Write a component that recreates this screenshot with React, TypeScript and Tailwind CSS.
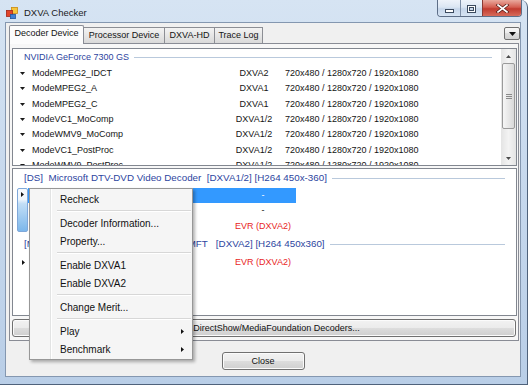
const RES = '720x480 / 1280x720 / 1920x1080';

const modes = [
  ['ModeMPEG2_IDCT', 'DXVA2'],
  ['ModeMPEG2_A', 'DXVA1'],
  ['ModeMPEG2_C', 'DXVA1'],
  ['ModeVC1_MoComp', 'DXVA1/2'],
  ['ModeWMV9_MoComp', 'DXVA1/2'],
  ['ModeVC1_PostProc', 'DXVA1/2'],
  ['ModeWMV9_PostProc', 'DXVA1/2'],
];

type MenuEntry = { label?: string; sub?: boolean; sep?: boolean };

const menu: MenuEntry[] = [
  { label: 'Recheck' },
  { sep: true },
  { label: 'Decoder Information...' },
  { label: 'Property...' },
  { sep: true },
  { label: 'Enable DXVA1' },
  { label: 'Enable DXVA2' },
  { sep: true },
  { label: 'Change Merit...' },
  { sep: true },
  { label: 'Play', sub: true },
  { label: 'Benchmark', sub: true },
];

function DownTri({ color = '#1a1a1a' }: { color?: string }) {
  return (
    <svg width="5" height="3" viewBox="0 0 5 3" className="shrink-0">
      <path d="M0 0H5L2.5 3Z" fill={color} />
    </svg>
  );
}

function UpTri() {
  return (
    <svg width="5" height="3" viewBox="0 0 5 3" className="shrink-0">
      <path d="M0 3H5L2.5 0Z" fill="#4a4a4a" />
    </svg>
  );
}

function RightTri() {
  return (
    <svg width="3" height="5" viewBox="0 0 3 5" className="shrink-0">
      <path d="M0 0V5L3 2.5Z" fill="#111" />
    </svg>
  );
}

function AppIcon() {
  return (
    <svg width="12" height="12" viewBox="0 0 12 12" className="mt-[7px] ml-[1px] shrink-0">
      <rect x="5.4" y="0.4" width="6" height="6" fill="#f6c63c" stroke="#c98a12" strokeWidth="0.8" />
      <rect x="0.4" y="3.4" width="6" height="6" fill="#e2452a" stroke="#a3261a" strokeWidth="0.8" />
      <rect x="4.4" y="7.4" width="5" height="4.2" fill="#3f7fd6" stroke="#23559e" strokeWidth="0.8" />
    </svg>
  );
}

function TitleBar() {
  return (
    <div className="h-[22px] shrink-0 flex items-start">
      <AppIcon />
      <span className="mt-[8px] ml-[6px] text-[9.5px] leading-[10px] text-[#1b1b1b]">DXVA Checker</span>
      <div className="ml-auto -mr-[1px] flex h-[17px] border border-t-0 border-[#5d6e87] rounded-b-[4px] overflow-hidden">
        <div className="w-[22px] flex items-end justify-center pb-[3px] bg-[linear-gradient(#eef3fa,#dbe6f3_45%,#c6d6ea_55%,#d6e4f3)]">
          <svg width="9" height="4" viewBox="0 0 9 4">
            <rect x="0.5" y="0.5" width="8" height="3" fill="#fff" stroke="#3b4a5e" strokeWidth="1" />
          </svg>
        </div>
        <div className="w-[22px] border-l border-[#7f90a8] flex items-start justify-center pt-[5px] bg-[linear-gradient(#eef3fa,#dbe6f3_45%,#c6d6ea_55%,#d6e4f3)]">
          <svg width="9" height="8" viewBox="0 0 9 8">
            <rect x="0.5" y="0.5" width="8" height="7" fill="none" stroke="#3b4a5e" strokeWidth="1" />
            <rect x="1.5" y="1.5" width="6" height="5" fill="none" stroke="#fff" strokeWidth="1" />
            <rect x="2.5" y="2.5" width="4" height="3" fill="none" stroke="#3b4a5e" strokeWidth="1" />
          </svg>
        </div>
        <div className="w-[39px] border-l border-[#8a3a33] flex items-start justify-center pt-[4px] bg-[linear-gradient(#e9aa9e,#d45e51_45%,#c13b2f_55%,#d76b5b)]">
          <svg width="15" height="9" viewBox="0 0 15 9">
            <path d="M3 1L12 8M12 1L3 8" stroke="#5a1f1a" strokeWidth="3.2" strokeLinecap="square" />
            <path d="M3 1L12 8M12 1L3 8" stroke="#fff" strokeWidth="1.6" strokeLinecap="square" />
          </svg>
        </div>
      </div>
    </div>
  );
}

function Tabs() {
  return (
    <div className="h-[18px] mt-[2px] shrink-0 flex items-end pl-[3px] text-[9px]">
      <div className="relative z-10 w-[75px] h-[19px] -mb-px pb-[2px] flex items-center justify-center border border-b-0 border-[#898c95] rounded-t-[2px] bg-[#fcfcfc]">
        Decoder Device
      </div>
      <div className="w-[81px] h-[16px] flex items-center justify-center border border-l-0 border-b-0 border-[#8c8e94] bg-gradient-to-b from-[#f3f3f3] to-[#d9d9d9]">
        Processor Device
      </div>
      <div className="w-[50px] h-[16px] flex items-center justify-center border border-l-0 border-b-0 border-[#8c8e94] bg-gradient-to-b from-[#f3f3f3] to-[#d9d9d9]">
        DXVA-HD
      </div>
      <div className="w-[48px] h-[16px] flex items-center justify-center border border-l-0 border-b-0 border-[#8c8e94] bg-gradient-to-b from-[#f3f3f3] to-[#d9d9d9]">
        Trace Log
      </div>
      <div className="ml-auto mb-[3px] w-[16px] h-[13px] flex items-center justify-center rounded-[2px] border border-[#707070] bg-[linear-gradient(#f7f7f7,#ececec_50%,#dedede_50%,#d2d2d2)]">
        <svg width="7" height="4" viewBox="0 0 7 4">
          <path d="M0 0H7L3.5 4Z" fill="#111" />
        </svg>
      </div>
    </div>
  );
}

function Scrollbar() {
  return (
    <div className="w-[15px] shrink-0 flex flex-col bg-gradient-to-r from-[#e4e4e4] via-[#f3f3f3] to-[#e4e4e4]">
      <div className="h-[14px] flex items-center justify-center">
        <UpTri />
      </div>
      <div className="mx-[1px] h-[66px] rounded-[2px] border border-[#9a9a9a] bg-gradient-to-r from-[#f6f6f6] to-[#d9d9d9] flex flex-col items-center justify-center gap-[1px]">
        <div className="w-[6px] h-px bg-[#8a8a8a]" />
        <div className="w-[6px] h-px bg-[#8a8a8a]" />
        <div className="w-[6px] h-px bg-[#8a8a8a]" />
      </div>
      <div className="flex-1" />
      <div className="h-[13px] flex items-center justify-center">
        <DownTri color="#4a4a4a" />
      </div>
    </div>
  );
}

function DeviceList() {
  return (
    <div className="h-[118px] shrink-0 flex border border-[#828790] bg-white overflow-hidden">
      <div className="flex-1 min-w-0">
        <div className="h-[17px] flex items-center pl-[11px] mr-[9px] text-[9px] text-[#2d45a0]">
          <span className="whitespace-nowrap">NVIDIA GeForce 7300 GS</span>
          <div className="flex-1 h-px ml-[5px] bg-[#b9c9dc]" />
        </div>
        {modes.map(([name, ver]) => (
          <div key={name} className="h-[15.33px] flex items-center pl-[7px] text-[9px] whitespace-nowrap">
            <DownTri />
            <span className="ml-[7px] w-[202px]">{name}</span>
            <span className="w-[40px] text-center">{ver}</span>
            <span className="ml-[11px]">{RES}</span>
          </div>
        ))}
      </div>
      <Scrollbar />
    </div>
  );
}

function DecoderList() {
  return (
    <div className="h-[148px] mt-[2px] shrink-0 border border-[#828790] bg-white overflow-hidden text-[9px]">
      <div className="h-[19px] flex items-center pl-[11px] mr-[11px] text-[9.8px] text-[#2d45a0]">
        <span className="whitespace-pre">[DS]  Microsoft DTV-DVD Video Decoder  [DXVA1/2] [H264 450x-360]</span>
        <div className="flex-1 h-px ml-[5px] bg-[#b9c9dc]" />
      </div>
      <div className="flex">
        <div className="ml-[4px] w-[11px] h-[44px] pt-[3px] flex justify-center rounded-[2px] border border-[#7fa8da] bg-[linear-gradient(#f6f9fd,#eef5fc_25%,#c2def6_35%,#7cb7eb)]">
          <RightTri />
        </div>
        <div className="flex flex-col">
          <div className="h-[15.33px] flex items-center bg-[#3399ff] text-white">
            <span className="w-[202px]" />
            <span className="w-[66px] text-center">-</span>
          </div>
          <div className="h-[15.33px] flex items-center">
            <span className="w-[202px]" />
            <span className="w-[66px] text-center">-</span>
          </div>
          <div className="h-[15.33px] flex items-center text-[#e81e25]">
            <span className="w-[202px]" />
            <span className="w-[66px] text-center">EVR (DXVA2)</span>
          </div>
        </div>
      </div>
      <div className="h-[20.67px] flex items-center pl-[11px] mr-[11px] text-[9.8px] text-[#2d45a0]">
        <span className="whitespace-pre">[MF]  Microsoft H.264 Video Decoder MFT   [DXVA2] [H264 450x360]</span>
        <div className="flex-1 h-px ml-[5px] bg-[#b9c9dc]" />
      </div>
      <div className="h-[15.33px] flex items-center pl-[9px] text-[#e81e25]">
        <RightTri />
        <span className="w-[205px]" />
        <span className="w-[66px] text-center">EVR (DXVA2)</span>
      </div>
    </div>
  );
}

function ContextMenu() {
  return (
    <div className="absolute left-[29px] top-[188px] w-[164px] h-[172px] flex border border-[#979797] bg-[#f5f5f5] shadow-[2px_2px_3px_rgba(0,0,0,0.3)] text-[10px] text-[#111]">
      <div className="w-[20px] shrink-0" />
      <div className="w-px bg-[#e2e3e3]" />
      <div className="w-px bg-white" />
      <div className="flex-1 flex flex-col py-[1px]">
        {menu.map((m, i) =>
          m.sep ? (
            <div key={i} className="h-[6px] flex flex-col justify-center ml-[5px] mr-[1px]">
              <div className="h-px bg-[#d7d7d7]" />
              <div className="h-px bg-white" />
            </div>
          ) : (
            <div key={i} className="h-[18px] flex items-center justify-between pl-[8px] pr-[8px]">
              <span>{m.label}</span>
              {m.sub && <RightTri />}
            </div>
          )
        )}
      </div>
    </div>
  );
}

export default function App() {
  return (
    <div className="relative w-[530px] h-[385px] overflow-hidden bg-white font-['Liberation_Sans',Arial,sans-serif] text-[#141414]">
      <div className="w-[528px] h-[385px] flex flex-col pl-[5px] pr-[6px] pb-[7px] border-r border-b border-[#4f627b] rounded-tr-[7px] bg-gradient-to-b from-[#d6e4f3] via-[#c6d8ed] to-[#b9cee7]">
        <TitleBar />
        <div className="flex-1 flex flex-col border border-[#8497b0] bg-[#f0f0f0]">
          <Tabs />
          <div className="ml-[3px] mr-[1px] h-[298px] shrink-0 flex flex-col border border-[#898c95] bg-[#f7f7f7] pt-[4px] pl-[2px] pr-[1px] pb-[3px]">
            <DeviceList />
            <DecoderList />
            <button className="mt-[3px] w-[504px] h-[18px] shrink-0 rounded-[3px] border border-[#707070] bg-[linear-gradient(#f2f2f2,#ebebeb_50%,#dddddd_50%,#cfcfcf)] shadow-[inset_0_0_0_1px_#fbfbfb] text-[9px] leading-none text-[#111]">
              Other DirectShow/MediaFoundation Decoders...
            </button>
          </div>
          <div className="mt-[11px] flex justify-center">
            <button className="w-[83px] h-[18px] rounded-[3px] border border-[#707070] bg-[linear-gradient(#f2f2f2,#ebebeb_50%,#dddddd_50%,#cfcfcf)] shadow-[inset_0_0_0_1px_#fbfbfb] text-[9px] leading-none text-[#111]">
              Close
            </button>
          </div>
        </div>
      </div>
      <ContextMenu />
    </div>
  );
}
